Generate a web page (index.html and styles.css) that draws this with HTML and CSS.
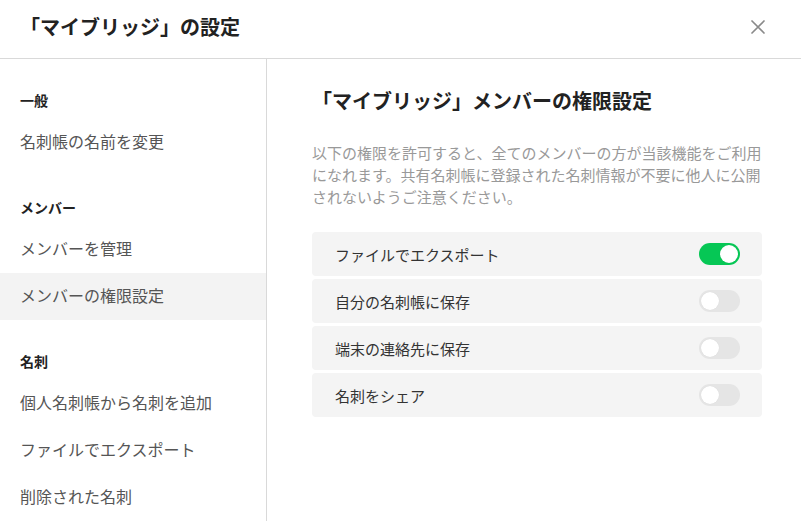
FILE: index.html
```html
<!DOCTYPE html>
<html lang="ja">
<head>
<meta charset="utf-8">
<title>「マイブリッジ」の設定</title>
<link rel="stylesheet" href="styles.css">
</head>
<body>
<div class="dialog">
  <header class="dialog-header">
    <h1 class="dialog-title">「マイブリッジ」の設定</h1>
    <button class="close-btn" aria-label="閉じる">
      <svg width="14" height="14" viewBox="0 0 14 14"><path d="M1 1L13 13M13 1L1 13" stroke="#8a8a8a" stroke-width="1.7" stroke-linecap="round" fill="none"/></svg>
    </button>
  </header>
  <div class="dialog-body">
    <nav class="sidebar">
      <div class="group-title">一般</div>
      <div class="nav-item">名刺帳の名前を変更</div>
      <div class="group-title">メンバー</div>
      <div class="nav-item">メンバーを管理</div>
      <div class="nav-item active">メンバーの権限設定</div>
      <div class="group-title">名刺</div>
      <div class="nav-item">個人名刺帳から名刺を追加</div>
      <div class="nav-item">ファイルでエクスポート</div>
      <div class="nav-item">削除された名刺</div>
    </nav>
    <main class="content">
      <h2 class="content-title">「マイブリッジ」メンバーの権限設定</h2>
      <p class="description">以下の権限を許可すると、全てのメンバーの方が当該機能をご利用になれます。共有名刺帳に登録された名刺情報が不要に他人に公開されないようご注意ください。</p>
      <ul class="perm-list">
        <li class="perm-row"><span>ファイルでエクスポート</span><span class="toggle on"><span class="knob"></span></span></li>
        <li class="perm-row"><span>自分の名刺帳に保存</span><span class="toggle"><span class="knob"></span></span></li>
        <li class="perm-row"><span>端末の連絡先に保存</span><span class="toggle"><span class="knob"></span></span></li>
        <li class="perm-row"><span>名刺をシェア</span><span class="toggle"><span class="knob"></span></span></li>
      </ul>
    </main>
  </div>
</div>
</body>
</html>
```
FILE: styles.css
```css
* { box-sizing: border-box; }
html, body {
  margin: 0;
  padding: 0;
  background: #fff;
  font-family: "Noto Sans CJK JP", "Noto Sans", sans-serif;
  color: #333;
}
.dialog {
  width: 801px;
  height: 521px;
  display: flex;
  flex-direction: column;
  overflow: hidden;
}
.dialog-header {
  height: 59px;
  flex: none;
  border-bottom: 1px solid #d9d9d9;
  display: flex;
  align-items: center;
  justify-content: space-between;
  padding: 0 36px 4px 20px;
}
.dialog-title {
  margin: 0;
  font-size: 20px;
  line-height: 28px;
  font-weight: 700;
  color: #222;
}
.close-btn {
  border: 0;
  background: none;
  padding: 0;
  width: 14px;
  height: 14px;
  display: flex;
  cursor: pointer;
}
.dialog-body {
  flex: 1;
  display: flex;
  min-height: 0;
}
.sidebar {
  width: 267px;
  flex: none;
  border-right: 1px solid #d9d9d9;
}
.group-title {
  padding: 31px 20px 9px;
  font-size: 14px;
  line-height: 20px;
  font-weight: 700;
  color: #222;
}
.nav-item {
  height: 47px;
  display: flex;
  align-items: center;
  padding: 0 20px 4px;
  font-size: 16px;
  color: #555;
}
.nav-item.active {
  background: #f3f3f3;
}
.content {
  flex: 1;
  padding: 28px 39px 0 45px;
}
.content-title {
  margin: 0;
  font-size: 20px;
  line-height: 28px;
  font-weight: 700;
  color: #222;
}
.description {
  margin: 27px 0 24px;
  font-size: 15px;
  line-height: 22px;
  color: #999;
}
.perm-list {
  list-style: none;
  margin: 0;
  padding: 0;
  display: flex;
  flex-direction: column;
  gap: 3px;
}
.perm-row {
  height: 44px;
  background: #f4f4f4;
  border-radius: 4px;
  display: flex;
  align-items: center;
  justify-content: space-between;
  padding: 0 22px 0 23px;
  font-size: 15px;
  color: #333;
}
.toggle {
  width: 41px;
  height: 22px;
  border-radius: 11px;
  background: #e5e5e5;
  position: relative;
  flex: none;
}
.toggle.on {
  background: #06c755;
}
.knob {
  position: absolute;
  top: 2px;
  left: 2px;
  width: 18px;
  height: 18px;
  border-radius: 50%;
  background: #fff;
  box-shadow: 0 0 1px rgba(0,0,0,0.1);
}
.toggle.on .knob {
  left: 21px;
}
```
